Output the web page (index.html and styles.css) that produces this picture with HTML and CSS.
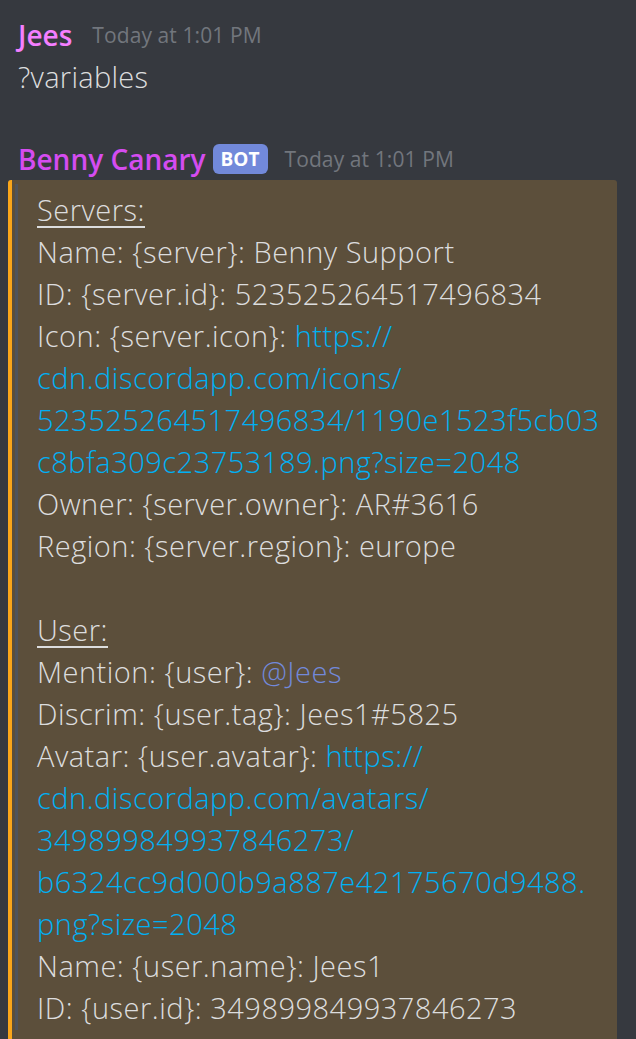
FILE: index.html
```html
<!DOCTYPE html>
<html>
<head>
<meta charset="utf-8">
<link rel="stylesheet" href="styles.css">
</head>
<body>
<div class="chat">
  <div class="message">
    <div class="header">
      <span class="name name-jees">Jees</span>
      <span class="time">Today at 1:01 PM</span>
    </div>
    <div class="content">?variables</div>
  </div>
  <div class="message message-bot">
    <div class="header">
      <span class="name name-bot">Benny Canary</span>
      <span class="badge">BOT</span>
      <span class="time">Today at 1:01 PM</span>
    </div>
    <div class="embed">
      <div class="quote">
        <div class="line"><span class="u">Servers:</span></div>
        <div class="line">Name: {server}: Benny Support</div>
        <div class="line">ID: {server.id}: 523525264517496834</div>
        <div class="line">Icon: {server.icon}: <span class="link">https://</span></div>
        <div class="line link">cdn.discordapp.com/icons/</div>
        <div class="line link">523525264517496834/1190e1523f5cb03</div>
        <div class="line link">c8bfa309c23753189.png?size=2048</div>
        <div class="line">Owner: {server.owner}: AR#3616</div>
        <div class="line">Region: {server.region}: europe</div>
        <div class="line blank">&nbsp;</div>
        <div class="line"><span class="u">User:</span></div>
        <div class="line">Mention: {user}: <span class="mention">@Jees</span></div>
        <div class="line">Discrim: {user.tag}: Jees1#5825</div>
        <div class="line">Avatar: {user.avatar}: <span class="link">https://</span></div>
        <div class="line link">cdn.discordapp.com/avatars/</div>
        <div class="line link">349899849937846273/</div>
        <div class="line link">b6324cc9d000b9a887e42175670d9488.</div>
        <div class="line link">png?size=2048</div>
        <div class="line">Name: {user.name}: Jees1</div>
        <div class="line">ID: {user.id}: 349899849937846273</div>
      </div>
    </div>
  </div>
</div>
</body>
</html>
```

FILE: styles.css
```css
html, body {
  margin: 0;
  padding: 0;
  background: #36393f;
}
body {
  width: 636px;
  height: 1039px;
  overflow: hidden;
  font-family: "Open Sans", "Noto Sans", sans-serif;
  color: #dcddde;
}
.chat {
  display: flex;
  flex-direction: column;
  padding-top: 14px;
}
.message {
  padding-left: 18px;
}
.message-bot {
  margin-top: 40px;
}
.header {
  display: flex;
  align-items: center;
  height: 42px;
}
.name {
  font-size: 28px;
  font-weight: 600;
}
.name-jees {
  color: #f47fff;
  margin-right: 20px;
}
.name-bot {
  color: #d54cf0;
  margin-right: 7px;
}
.badge {
  background: #7289da;
  color: #ffffff;
  font-size: 19px;
  font-weight: 700;
  border-radius: 6px;
  height: 30px;
  width: 55px;
  display: flex;
  align-items: center;
  justify-content: center;
  margin-right: 17px;
}
.time {
  color: #72767d;
  font-size: 21px;
  letter-spacing: 0.1px;
}
.content {
  font-size: 29px;
  line-height: 42px;
  font-weight: 300;
  letter-spacing: 0.3px;
}
.embed {
  margin-left: -10px;
  margin-right: 19px;
  background: #5c4f3b;
  border-left: 4px solid #faa61a;
  border-radius: 3px 3px 0 0;
  padding: 4px 0 20px 3px;
}
.quote {
  border-left: 3px solid #4f545c;
  padding: 5px 0 1px 19px;
}
.line {
  font-size: 29px;
  line-height: 42px;
  font-weight: 300;
  letter-spacing: 0.5px;
  white-space: nowrap;
}
.u {
  text-decoration: underline;
  text-decoration-thickness: 2px;
  text-underline-offset: 5px;
}
.link {
  color: #00b0f4;
}
.mention {
  color: #7289da;
}
```
